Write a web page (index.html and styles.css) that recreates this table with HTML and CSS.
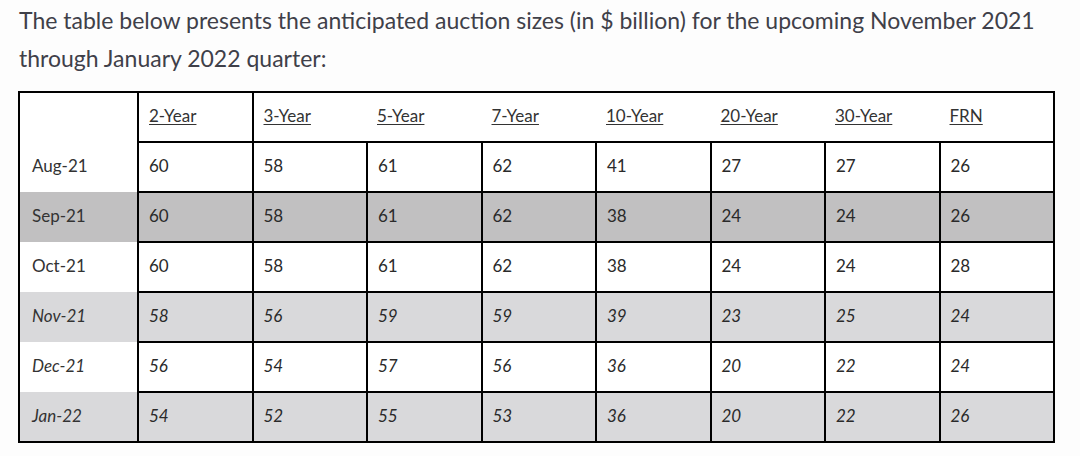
FILE: index.html
```html
<!DOCTYPE html>
<html>
<head>
<meta charset="utf-8">
<link rel="stylesheet" href="styles.css">
</head>
<body>
<div class="page">
  <p class="intro">The table below presents the anticipated auction sizes (in $ billion) for the upcoming November 2021 through January 2022 quarter:</p>
  <table class="auction">
    <colgroup>
      <col class="c-label"><col><col><col><col><col><col><col><col>
    </colgroup>
    <thead>
      <tr>
        <th class="corner"></th>
        <th class="h-first"><a>2-Year</a></th>
        <th><a>3-Year</a></th>
        <th><a>5-Year</a></th>
        <th><a>7-Year</a></th>
        <th><a>10-Year</a></th>
        <th><a>20-Year</a></th>
        <th><a>30-Year</a></th>
        <th class="h-last"><a>FRN</a></th>
      </tr>
    </thead>
    <tbody>
      <tr><td class="label">Aug-21</td><td>60</td><td>58</td><td>61</td><td>62</td><td>41</td><td>27</td><td>27</td><td>26</td></tr>
      <tr class="dark"><td class="label">Sep-21</td><td>60</td><td>58</td><td>61</td><td>62</td><td>38</td><td>24</td><td>24</td><td>26</td></tr>
      <tr><td class="label">Oct-21</td><td>60</td><td>58</td><td>61</td><td>62</td><td>38</td><td>24</td><td>24</td><td>28</td></tr>
      <tr class="light est"><td class="label">Nov-21</td><td>58</td><td>56</td><td>59</td><td>59</td><td>39</td><td>23</td><td>25</td><td>24</td></tr>
      <tr class="est"><td class="label">Dec-21</td><td>56</td><td>54</td><td>57</td><td>56</td><td>36</td><td>20</td><td>22</td><td>24</td></tr>
      <tr class="light est last"><td class="label">Jan-22</td><td>54</td><td>52</td><td>55</td><td>53</td><td>36</td><td>20</td><td>22</td><td>26</td></tr>
    </tbody>
  </table>
</div>
</body>
</html>
```

FILE: styles.css
```css
html, body {
  margin: 0;
  padding: 0;
  background: #fdfdfd;
}

.page {
  padding: 1px 0 0 19px;
}

.intro {
  margin: 0 0 14px 0;
  width: 1060px;
  font-family: "Lato", "Liberation Sans", sans-serif;
  font-size: 23px;
  line-height: 38px;
  color: #3f4049;
}

.auction {
  margin-left: -1px;
  border-collapse: collapse;
  table-layout: fixed;
  width: 1037px;
  font-family: "Lato", "Liberation Sans", sans-serif;
  font-size: 17px;
  color: #2a2a2a;
  background: #fff;
}

.c-label {
  width: 119px;
}

.auction th,
.auction td {
  height: 45px;
  padding: 0 0 3px 10px;
  text-align: left;
  vertical-align: middle;
  font-weight: normal;
}

.auction th {
  border-top: 2px solid #000;
  border-bottom: 2px solid #000;
}

.auction th a {
  color: #333;
  text-decoration: underline;
  text-underline-offset: 2px;
}

.auction th.corner {
  border-left: 2px solid #000;
  border-right: 2px solid #000;
  border-bottom: none;
}

.auction th.h-first {
  border-right: 2px solid #000;
}

.auction th.h-last {
  border-right: 2px solid #000;
}

.auction td {
  border: 2px solid #000;
}

.auction td.label {
  border-top: none;
  border-bottom: none;
  border-left: 2px solid #000;
  padding-left: 12px;
  color: #333;
}

.auction tr.last td.label {
  border-bottom: 2px solid #000;
}

.auction tr.dark td {
  background: #c1c0c1;
}

.auction tr.light td {
  background: #d9d9db;
}

.auction tr.est td {
  font-style: italic;
}
```
